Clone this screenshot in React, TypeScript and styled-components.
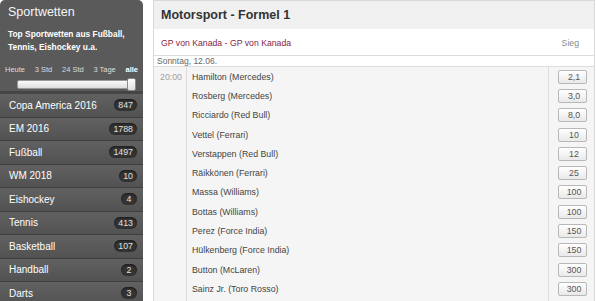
import React from 'react';
import styled, { createGlobalStyle } from 'styled-components';

const GlobalStyle = createGlobalStyle`
  html, body {
    margin: 0;
    padding: 0;
    background: #ffffff;
    font-family: "Liberation Sans", Arial, sans-serif;
    overflow: hidden;
  }
`;

const Page = styled.div`
  display: flex;
  align-items: flex-start;
  gap: 10px;
  width: 596px;
  height: 301px;
  overflow: hidden;
`;

const Sidebar = styled.aside`
  width: 143px;
  flex: none;
  background: #5a5a5a;
  border-radius: 5px 5px 0 0;
  color: #ffffff;
`;

const SideHead = styled.div`
  padding: 4px 6px 0 8px;
  height: 94px;
  box-sizing: border-box;
  border-bottom: 3px solid #454545;
`;

const SideTitle = styled.div`
  font-size: 12.5px;
  line-height: 16px;
  color: #f4f4f4;
`;

const SideText = styled.div`
  margin-top: 8px;
  font-size: 8.4px;
  font-weight: bold;
  line-height: 12.5px;
  white-space: nowrap;
`;

const RangeLabels = styled.div`
  display: flex;
  justify-content: space-between;
  margin: 12px -1px 0 -3px;
  font-size: 7.5px;
  color: #dcdcdc;
`;

const RangeLabel = styled.span<{ $active?: boolean }>`
  font-weight: ${p => (p.$active ? 'bold' : 'normal')};
  color: ${p => (p.$active ? '#ffffff' : '#dcdcdc')};
`;

const Track = styled.div`
  position: relative;
  margin: 6px 2px 0 9px;
  height: 7px;
  border: 1px solid #9a9a9a;
  background: linear-gradient(#fafafa, #dddddd);
  border-radius: 2px;
`;

const Thumb = styled.div`
  position: absolute;
  right: -2px;
  top: -3px;
  width: 7px;
  height: 11px;
  border: 1px solid #8a8a8a;
  border-radius: 2px;
  background: linear-gradient(#ffffff, #e0e0e0);
`;

const MenuItem = styled.div`
  display: flex;
  align-items: center;
  justify-content: space-between;
  height: 22.5px;
  padding: 0 6px 0 9px;
  border-bottom: 1px solid #3f3f3f;
  background: linear-gradient(#616161, #525252);
  font-size: 10px;
  color: #ffffff;
`;

const Badge = styled.span`
  min-width: 8px;
  padding: 0 4px;
  height: 12px;
  line-height: 12px;
  border-radius: 6px;
  background: #333333;
  box-shadow: inset 0 1px 2px #1a1a1a;
  color: #e0e0e0;
  font-size: 8.8px;
  text-align: center;
`;

const Main = styled.main`
  flex: 1;
  margin-right: 1px;
  border: 1px solid #d9d9d9;
  border-bottom: none;
`;

const MainHead = styled.div`
  height: 28px;
  display: flex;
  align-items: center;
  padding-left: 7px;
  background: #f0f0f0;
  font-size: 12.5px;
  font-weight: bold;
  color: #333333;
`;

const EventHead = styled.div`
  display: flex;
  align-items: center;
  justify-content: space-between;
  height: 27px;
  padding: 2px 15px 0 7px;
  box-sizing: border-box;
  background: #ffffff;
  border-bottom: 1px solid #dcdcdc;
  font-size: 8.7px;
`;

const EventName = styled.span`
  color: #8a2448;
`;

const ColLabel = styled.span`
  color: #8a8a8a;
`;

const DayRow = styled.div`
  height: 10px;
  line-height: 10px;
  padding-left: 3px;
  font-size: 8.5px;
  color: #666666;
  background: #ffffff;
  border-bottom: 1px solid #dcdcdc;
`;

const Grid = styled.div`
  display: grid;
  grid-template-columns: 33px 1fr 46px;
  background: #f5f5f5;
`;

const TimeCell = styled.div`
  grid-row: span 13;
  padding: 5px 0 0 6px;
  font-size: 8.8px;
  color: #a0a0a0;
  border-right: 1px solid #dddddd;
`;

const NameCell = styled.div`
  height: 19.3px;
  display: flex;
  align-items: center;
  padding-left: 5px;
  font-size: 8.8px;
  color: #444444;
`;

const OddsCell = styled.div`
  height: 19.3px;
  display: flex;
  align-items: center;
  padding-left: 9px;
  border-left: 1px solid #dddddd;
`;

const OddsButton = styled.span`
  box-sizing: border-box;
  width: 29px;
  height: 14px;
  padding-left: 3px;
  border: 1px solid #b8b8b8;
  border-radius: 2px;
  background: linear-gradient(#ffffff, #e9e9e9);
  font-size: 8.8px;
  line-height: 12px;
  color: #555555;
  text-align: center;
`;

const sports: [string, number][] = [
  ['Copa America 2016', 847],
  ['EM 2016', 1788],
  ['Fußball', 1497],
  ['WM 2018', 10],
  ['Eishockey', 4],
  ['Tennis', 413],
  ['Basketball', 107],
  ['Handball', 2],
  ['Darts', 3],
];

const drivers: [string, string][] = [
  ['Hamilton (Mercedes)', '2,1'],
  ['Rosberg (Mercedes)', '3,0'],
  ['Ricciardo (Red Bull)', '8,0'],
  ['Vettel (Ferrari)', '10'],
  ['Verstappen (Red Bull)', '12'],
  ['Räikkönen (Ferrari)', '25'],
  ['Massa (Williams)', '100'],
  ['Bottas (Williams)', '100'],
  ['Perez (Force India)', '150'],
  ['Hülkenberg (Force India)', '150'],
  ['Button (McLaren)', '300'],
  ['Sainz Jr. (Toro Rosso)', '300'],
  ['Alonso (McLaren)', '300'],
];

export default function App() {
  return (
    <>
      <GlobalStyle />
      <Page>
        <Sidebar>
          <SideHead>
            <SideTitle>Sportwetten</SideTitle>
            <SideText>
              Top Sportwetten aus Fußball,
              <br />
              Tennis, Eishockey u.a.
            </SideText>
            <RangeLabels>
              <RangeLabel>Heute</RangeLabel>
              <RangeLabel>3 Std</RangeLabel>
              <RangeLabel>24 Std</RangeLabel>
              <RangeLabel>3 Tage</RangeLabel>
              <RangeLabel $active>alle</RangeLabel>
            </RangeLabels>
            <Track>
              <Thumb />
            </Track>
          </SideHead>
          {sports.map(([name, count]) => (
            <MenuItem key={name}>
              <span>{name}</span>
              <Badge>{count}</Badge>
            </MenuItem>
          ))}
        </Sidebar>
        <Main>
          <MainHead>Motorsport - Formel 1</MainHead>
          <EventHead>
            <EventName>GP von Kanada - GP von Kanada</EventName>
            <ColLabel>Sieg</ColLabel>
          </EventHead>
          <DayRow>Sonntag, 12.06.</DayRow>
          <Grid>
            <TimeCell>20:00</TimeCell>
            {drivers.map(([name, odds]) => (
              <React.Fragment key={name}>
                <NameCell>{name}</NameCell>
                <OddsCell>
                  <OddsButton>{odds}</OddsButton>
                </OddsCell>
              </React.Fragment>
            ))}
          </Grid>
        </Main>
      </Page>
    </>
  );
}
